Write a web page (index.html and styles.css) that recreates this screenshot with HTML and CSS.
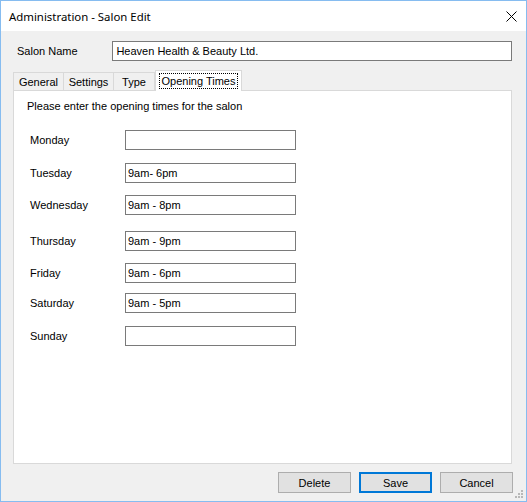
FILE: index.html
```html
<!DOCTYPE html>
<html>
<head>
<meta charset="utf-8">
<link rel="stylesheet" href="styles.css">
</head>
<body>
<div class="window">
  <div class="titlebar">
    <span class="title">Administration - Salon Edit</span>
    <svg class="close" width="11" height="11" viewBox="0 0 11 11"><path d="M0.5 0.5 L10.5 10.5 M10.5 0.5 L0.5 10.5" stroke="#000" stroke-width="1" fill="none"/></svg>
  </div>
  <div class="content">
    <div class="salon-row">
      <span class="salon-label">Salon Name</span>
      <div class="salon-input">Heaven Health &amp; Beauty Ltd.</div>
    </div>
    <div class="tabs">
      <div class="tab tab-general">General</div>
      <div class="tab tab-settings">Settings</div>
      <div class="tab tab-type">Type</div>
      <div class="tab tab-active"><span class="focus">Opening Times</span></div>
    </div>
    <div class="panel">
      <p class="intro">Please enter the opening times for the salon</p>
      <div class="day-row gap-first"><span class="day">Monday</span><div class="field"></div></div>
      <div class="day-row gap-13"><span class="day">Tuesday</span><div class="field">9am- 6pm</div></div>
      <div class="day-row gap-12"><span class="day">Wednesday</span><div class="field">9am - 8pm</div></div>
      <div class="day-row gap-16"><span class="day">Thursday</span><div class="field">9am - 9pm</div></div>
      <div class="day-row gap-12"><span class="day">Friday</span><div class="field">9am - 6pm</div></div>
      <div class="day-row gap-10"><span class="day">Saturday</span><div class="field">9am - 5pm</div></div>
      <div class="day-row gap-13"><span class="day">Sunday</span><div class="field"></div></div>
    </div>
    <div class="buttons">
      <div class="btn">Delete</div>
      <div class="btn btn-default">Save</div>
      <div class="btn">Cancel</div>
    </div>
  </div>
  <svg class="grip" width="9" height="9" viewBox="0 0 9 9">
    <rect x="6" y="0" width="2" height="2" fill="#b8b8b8"/>
    <rect x="3" y="3" width="2" height="2" fill="#b8b8b8"/>
    <rect x="6" y="3" width="2" height="2" fill="#b8b8b8"/>
    <rect x="0" y="6" width="2" height="2" fill="#b8b8b8"/>
    <rect x="3" y="6" width="2" height="2" fill="#b8b8b8"/>
    <rect x="6" y="6" width="2" height="2" fill="#b8b8b8"/>
  </svg>
</div>
</body>
</html>
```

FILE: styles.css
```css
html, body {
  margin: 0;
  padding: 0;
  background: #ffffff;
}

.window {
  position: relative;
  width: 527px;
  height: 502px;
  box-sizing: border-box;
  border: 1px solid #86bcf0;
  background: #f0f0f0;
  display: flex;
  flex-direction: column;
  font-family: "Liberation Sans", Arial, sans-serif;
  font-size: 11px;
  color: #000;
}

.titlebar {
  height: 30px;
  background: #ffffff;
  display: flex;
  align-items: center;
  justify-content: space-between;
  padding: 0 9px 0 8px;
  flex-shrink: 0;
}

.title {
  font-family: "Noto Sans", "Open Sans", sans-serif;
  font-size: 11.4px;
  margin-top: 1px;
}

.close {
  display: block;
  margin-top: 1px;
}

.content {
  flex: 1;
  display: flex;
  flex-direction: column;
  padding: 10px 14px 0 12px;
}

.salon-row {
  display: flex;
  align-items: center;
  height: 20px;
}

.salon-label {
  width: 100px;
  padding-left: 4px;
  box-sizing: border-box;
  font-size: 11px;
}

.salon-input {
  width: 402px;
  height: 20px;
  box-sizing: border-box;
  border: 1px solid #7a7a7a;
  background: #fff;
  padding: 0 3px;
  line-height: 18px;
  font-size: 11px;
  white-space: nowrap;
}

.tabs {
  display: flex;
  align-items: flex-end;
  height: 20px;
  margin-top: 9px;
}

.tab {
  height: 18px;
  box-sizing: border-box;
  border: 1px solid #d9d9d9;
  border-bottom: none;
  background: #f0f0f0;
  display: flex;
  align-items: center;
  justify-content: center;
  font-size: 11px;
  margin-right: -1px;
}

.tab-general { width: 51px; }
.tab-settings { width: 51px; }
.tab-type { width: 42px; }

.tab-active {
  position: relative;
  z-index: 1;
  width: 87px;
  height: 21px;
  margin-bottom: -1px;
  background: #ffffff;
  align-items: flex-start;
  padding-top: 2px;
  margin-left: 1px;
}

.focus {
  display: block;
  border: 1px dotted #000;
  padding: 0 2px;
  line-height: 14px;
}

.panel {
  width: 499px;
  height: 374px;
  box-sizing: border-box;
  border: 1px solid #d9d9d9;
  background: #ffffff;
  padding: 9px 13px 0 13px;
}

.intro {
  margin: 0;
  line-height: 13px;
  height: 13px;
}

.day-row {
  display: flex;
  align-items: center;
  height: 20px;
  padding-left: 3px;
}

.gap-first { margin-top: 17px; }
.gap-10 { margin-top: 10px; }
.gap-12 { margin-top: 12px; }
.gap-13 { margin-top: 13px; }
.gap-16 { margin-top: 16px; }

.day {
  width: 95px;
}

.field {
  width: 171px;
  height: 20px;
  box-sizing: border-box;
  border: 1px solid #7a7a7a;
  background: #fff;
  padding: 0 2px;
  line-height: 18px;
  white-space: nowrap;
}

.buttons {
  display: flex;
  justify-content: flex-end;
  gap: 8px;
  margin-top: 8px;
  margin-right: -1px;
}

.btn {
  width: 73px;
  height: 21px;
  box-sizing: border-box;
  border: 1px solid #adadad;
  background: #e1e1e1;
  display: flex;
  align-items: center;
  justify-content: center;
  font-size: 11px;
}

.btn-default {
  border: 2px solid #0078d7;
}

.grip {
  position: absolute;
  right: 2px;
  bottom: 2px;
}
```
